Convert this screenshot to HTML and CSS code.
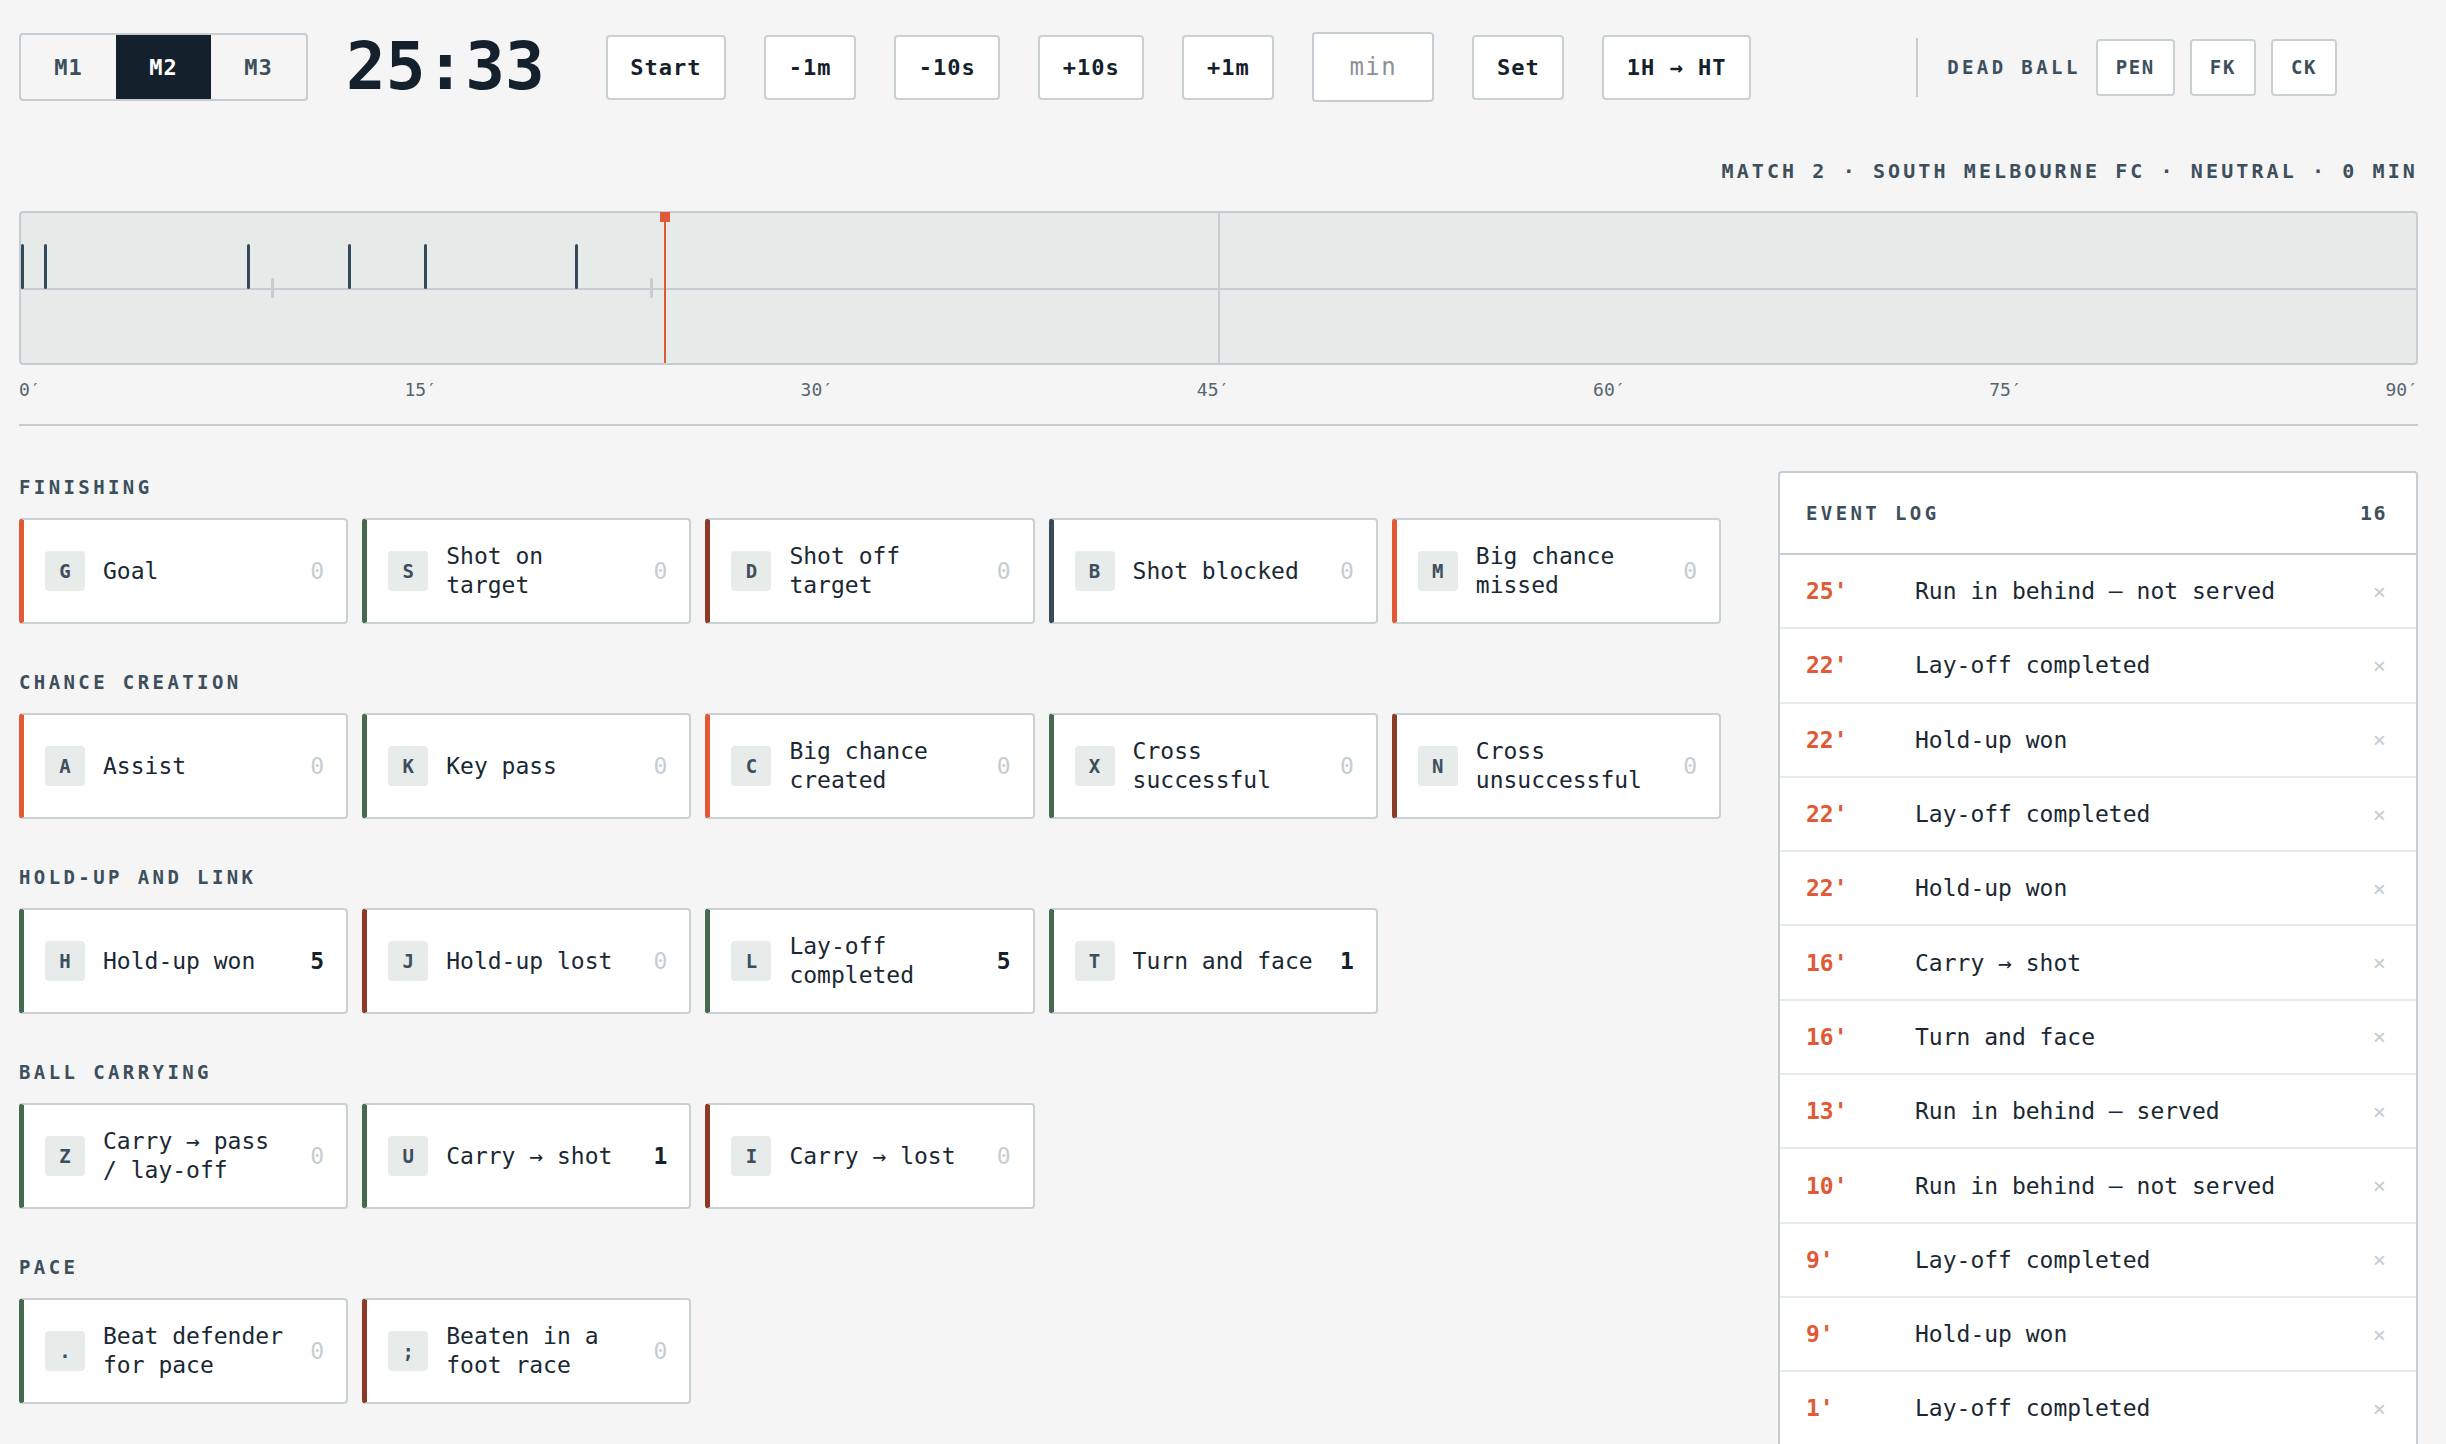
FILE: index.html
```html
<!DOCTYPE html>
<html lang="en">
<head>
  <meta charset="UTF-8" />
  <title>Match Tagger</title>
  <link rel="stylesheet" href="styles.css">
</head>
<body>

  <div class="topbar">
    <div class="match-switch">
      <button class="match-btn">M1</button>
      <button class="match-btn active">M2</button>
      <button class="match-btn">M3</button>
    </div>
    <div class="clock">25:33</div>
    <button class="btn">Start</button>
    <button class="btn">-1m</button>
    <button class="btn">-10s</button>
    <button class="btn">+10s</button>
    <button class="btn">+1m</button>
    <input class="min-input" type="text" placeholder="min" />
    <button class="btn">Set</button>
    <button class="btn">1H → HT</button>
    <div class="deadball">
      <span class="deadball-label">DEAD BALL</span>
      <button class="btn-small">PEN</button>
      <button class="btn-small">FK</button>
      <button class="btn-small">CK</button>
    </div>
  </div>

  <div class="meta">MATCH 2 · SOUTH MELBOURNE FC · NEUTRAL · 0 MIN</div>

  <div class="timeline">
    <div class="tl-mid"></div>
    <div class="tl-half"></div>
    <span class="mark" style="left:0%"></span>
    <span class="mark" style="left:0.98%"></span>
    <span class="mark" style="left:9.42%"></span>
    <span class="mark minor" style="left:10.44%"></span>
    <span class="mark" style="left:13.65%"></span>
    <span class="mark" style="left:16.82%"></span>
    <span class="mark" style="left:23.12%"></span>
    <span class="mark minor" style="left:26.26%"></span>
    <span class="playhead" style="left:26.86%"></span>
  </div>
  <div class="ticks">
    <span>0′</span><span>15′</span><span>30′</span><span>45′</span><span>60′</span><span>75′</span><span>90′</span>
  </div>
  <div class="divider"></div>

  <div class="main">
    <div class="groups">

      <section class="group">
        <h3>Finishing</h3>
        <div class="cards">
          <button class="card orange"><span class="key">G</span><span class="label">Goal</span><span class="count">0</span></button>
          <button class="card green"><span class="key">S</span><span class="label">Shot on target</span><span class="count">0</span></button>
          <button class="card brown"><span class="key">D</span><span class="label">Shot off target</span><span class="count">0</span></button>
          <button class="card slate"><span class="key">B</span><span class="label">Shot blocked</span><span class="count">0</span></button>
          <button class="card orange"><span class="key">M</span><span class="label">Big chance missed</span><span class="count">0</span></button>
        </div>
      </section>

      <section class="group">
        <h3>Chance creation</h3>
        <div class="cards">
          <button class="card orange"><span class="key">A</span><span class="label">Assist</span><span class="count">0</span></button>
          <button class="card green"><span class="key">K</span><span class="label">Key pass</span><span class="count">0</span></button>
          <button class="card orange"><span class="key">C</span><span class="label">Big chance created</span><span class="count">0</span></button>
          <button class="card green"><span class="key">X</span><span class="label">Cross successful</span><span class="count">0</span></button>
          <button class="card brown"><span class="key">N</span><span class="label">Cross unsuccessful</span><span class="count">0</span></button>
        </div>
      </section>

      <section class="group">
        <h3>Hold-up and link</h3>
        <div class="cards">
          <button class="card green"><span class="key">H</span><span class="label">Hold-up won</span><span class="count on">5</span></button>
          <button class="card brown"><span class="key">J</span><span class="label">Hold-up lost</span><span class="count">0</span></button>
          <button class="card green"><span class="key">L</span><span class="label">Lay-off completed</span><span class="count on">5</span></button>
          <button class="card green"><span class="key">T</span><span class="label">Turn and face</span><span class="count on">1</span></button>
        </div>
      </section>

      <section class="group">
        <h3>Ball carrying</h3>
        <div class="cards">
          <button class="card green"><span class="key">Z</span><span class="label">Carry → pass / lay-off</span><span class="count">0</span></button>
          <button class="card green"><span class="key">U</span><span class="label">Carry → shot</span><span class="count on">1</span></button>
          <button class="card brown"><span class="key">I</span><span class="label">Carry → lost</span><span class="count">0</span></button>
        </div>
      </section>

      <section class="group">
        <h3>Pace</h3>
        <div class="cards">
          <button class="card green"><span class="key">.</span><span class="label">Beat defender for pace</span><span class="count">0</span></button>
          <button class="card brown"><span class="key">;</span><span class="label">Beaten in a foot race</span><span class="count">0</span></button>
        </div>
      </section>

    </div>

    <div class="log">
      <div class="log-head">
        <span class="log-title">EVENT LOG</span>
        <span class="log-count">16</span>
      </div>
      <div class="log-row"><span class="log-time">25'</span><span class="log-text">Run in behind – not served</span><span class="log-del">×</span></div>
      <div class="log-row"><span class="log-time">22'</span><span class="log-text">Lay-off completed</span><span class="log-del">×</span></div>
      <div class="log-row"><span class="log-time">22'</span><span class="log-text">Hold-up won</span><span class="log-del">×</span></div>
      <div class="log-row"><span class="log-time">22'</span><span class="log-text">Lay-off completed</span><span class="log-del">×</span></div>
      <div class="log-row"><span class="log-time">22'</span><span class="log-text">Hold-up won</span><span class="log-del">×</span></div>
      <div class="log-row"><span class="log-time">16'</span><span class="log-text">Carry → shot</span><span class="log-del">×</span></div>
      <div class="log-row"><span class="log-time">16'</span><span class="log-text">Turn and face</span><span class="log-del">×</span></div>
      <div class="log-row"><span class="log-time">13'</span><span class="log-text">Run in behind – served</span><span class="log-del">×</span></div>
      <div class="log-row"><span class="log-time">10'</span><span class="log-text">Run in behind – not served</span><span class="log-del">×</span></div>
      <div class="log-row"><span class="log-time">9'</span><span class="log-text">Lay-off completed</span><span class="log-del">×</span></div>
      <div class="log-row"><span class="log-time">9'</span><span class="log-text">Hold-up won</span><span class="log-del">×</span></div>
      <div class="log-row"><span class="log-time">1'</span><span class="log-text">Lay-off completed</span><span class="log-del">×</span></div>
    </div>
  </div>

</body>
</html>
```

FILE: styles.css
```css
* {
  box-sizing: border-box;
}

body {
  margin: 0;
  padding: 31px 28px 0 19px;
  background: #f5f5f5;
  font-family: "DejaVu Sans Mono", "Liberation Mono", monospace;
  color: #14202b;
}

button,
input {
  font-family: inherit;
}

/* top bar */

.topbar {
  display: flex;
  align-items: center;
  gap: 38px;
  height: 72px;
}

.match-switch {
  display: flex;
  height: 68px;
  border: 2px solid #c5cdd2;
  border-radius: 4px;
  overflow: hidden;
}

.match-btn {
  width: 95px;
  border: none;
  background: transparent;
  font-size: 22px;
  font-weight: 700;
  letter-spacing: 1px;
  color: #3d4f5c;
}

.match-btn.active {
  background: #14202b;
  color: #fff;
}

.clock {
  margin-right: 23px;
  font-size: 66px;
  font-weight: 700;
  line-height: 1;
  color: #14202b;
}

.btn {
  height: 65px;
  padding: 0 22.6px;
  background: #fff;
  border: 2px solid #c8d0d4;
  border-radius: 4px;
  font-size: 22px;
  font-weight: 700;
  letter-spacing: 1px;
  color: #14202b;
}

.min-input {
  width: 122px;
  height: 70px;
  background: #fff;
  border: 2px solid #c5cdd2;
  border-radius: 4px;
  text-align: center;
  font-size: 24px;
  letter-spacing: 1.5px;
}

.min-input::placeholder {
  color: #8d9297;
}

.deadball {
  display: flex;
  align-items: center;
  gap: 15px;
  height: 59px;
  margin-left: 127px;
  padding-left: 29px;
  border-left: 2px solid #c5cdd2;
}

.deadball-label {
  margin-right: 0;
  font-size: 19px;
  font-weight: 700;
  letter-spacing: 3.4px;
  color: #3d4f5c;
}

.btn-small {
  height: 57px;
  padding: 0 18px;
  background: #fff;
  border: 2px solid #c8d0d4;
  border-radius: 4px;
  font-size: 19px;
  font-weight: 700;
  letter-spacing: 1.6px;
  color: #3d4f5c;
}

.meta {
  margin-top: 58px;
  text-align: right;
  font-size: 20px;
  line-height: 20px;
  font-weight: 700;
  letter-spacing: 3.1px;
  color: #3d4f5c;
}

/* timeline */

.timeline {
  position: relative;
  height: 154px;
  margin-top: 30px;
  background: #e6eae9;
  border: 2px solid #c5cdd2;
  border-radius: 4px;
}

.tl-mid {
  position: absolute;
  left: 0;
  right: 0;
  top: 75px;
  height: 2px;
  background: #c5cdd2;
}

.tl-half {
  position: absolute;
  left: 50%;
  top: 0;
  bottom: 0;
  width: 2px;
  margin-left: -1px;
  background: #c5cdd2;
}

.mark {
  position: absolute;
  top: 31px;
  width: 3px;
  height: 45px;
  background: #34495a;
  border-radius: 2px;
}

.mark.minor {
  top: 65px;
  height: 20px;
  background: #c5cdd2;
}

.playhead {
  position: absolute;
  top: 0;
  bottom: 0;
  width: 2px;
  background: #e05a35;
}

.playhead::before {
  content: "";
  position: absolute;
  top: -1px;
  left: -4px;
  width: 10px;
  height: 10px;
  background: #e05a35;
}

.ticks {
  display: flex;
  justify-content: space-between;
  margin-top: 16px;
  font-size: 18px;
  line-height: 18px;
  color: #56666f;
}

.divider {
  height: 2px;
  margin-top: 25px;
  background: #c5cdd2;
}

/* main area */

.main {
  display: grid;
  grid-template-columns: 1fr 640px;
  column-gap: 57px;
  align-items: start;
  margin-top: 45px;
}

.groups {
  padding-top: 6px;
}

.group + .group {
  margin-top: 48px;
}

.group h3 {
  margin: 0 0 21px;
  font-size: 19px;
  line-height: 20px;
  font-weight: 700;
  letter-spacing: 3.4px;
  text-transform: uppercase;
  color: #3d4f5c;
}

.cards {
  display: grid;
  grid-template-columns: repeat(5, 1fr);
  gap: 14px;
}

.card {
  display: flex;
  align-items: center;
  gap: 18px;
  height: 106px;
  padding: 0 22px 0 21px;
  background: #fff;
  border: 2px solid #c9d1d5;
  border-left: 5px solid #44694f;
  border-radius: 4px;
  text-align: left;
  cursor: pointer;
}

.card.orange { border-left-color: #e05a35; }
.card.green { border-left-color: #44694f; }
.card.brown { border-left-color: #8a3a26; }
.card.slate { border-left-color: #374a59; }

.key {
  flex: none;
  display: flex;
  align-items: center;
  justify-content: center;
  width: 40px;
  height: 40px;
  background: #e7ebea;
  border-radius: 4px;
  font-size: 19px;
  font-weight: 700;
  color: #3d4f5c;
}

.label {
  flex: 1;
  font-size: 23px;
  line-height: 29px;
  color: #1a2833;
}

.count {
  flex: none;
  min-width: 14px;
  text-align: right;
  font-size: 23px;
  color: #c5cdd2;
}

.count.on {
  font-weight: 700;
  color: #14202b;
}

/* event log */

.log {
  background: #fff;
  border: 2px solid #c5cdd2;
  border-radius: 4px 4px 0 0;
}

.log-head {
  display: flex;
  align-items: center;
  justify-content: space-between;
  height: 82px;
  padding: 0 29px 0 26px;
  border-bottom: 2px solid #c5cdd2;
}

.log-title {
  font-size: 19px;
  font-weight: 700;
  letter-spacing: 3.4px;
  color: #3d4f5c;
}

.log-count {
  font-size: 20px;
  font-weight: 700;
  letter-spacing: 1.5px;
  color: #3d4f5c;
}

.log-row {
  display: flex;
  align-items: center;
  height: 74.3px;
  padding: 0 30px 0 26px;
  border-bottom: 2px solid #e6eaea;
}

.log-time {
  flex: none;
  width: 109px;
  font-size: 23px;
  font-weight: 700;
  color: #e05a35;
}

.log-text {
  flex: 1;
  font-size: 23px;
  color: #1a2833;
}

.log-del {
  font-size: 22px;
  color: #c5cdd2;
}
```
